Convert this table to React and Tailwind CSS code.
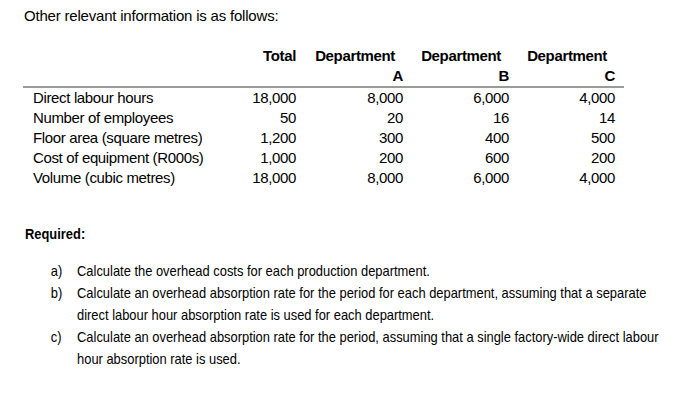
import React from "react";

const rows = [
  ["Direct labour hours", "18,000", "8,000", "6,000", "4,000"],
  ["Number of employees", "50", "20", "16", "14"],
  ["Floor area (square metres)", "1,200", "300", "400", "500"],
  ["Cost of equipment (R000s)", "1,000", "200", "600", "200"],
  ["Volume (cubic metres)", "18,000", "8,000", "6,000", "4,000"],
];

const grid = "grid grid-cols-[193px_80px_107px_106px_106px_9px]";

export default function App() {
  return (
    <div
      className="w-[700px] h-[407px] bg-white text-black overflow-hidden"
      style={{ fontFamily: '"Liberation Sans", Arial, sans-serif' }}
    >
      <p className="pt-[6px] pl-[24px] text-[15px] leading-[20px] tracking-[-0.2px]">
        Other relevant information is as follows:
      </p>

      <div className="ml-[23px] mt-[20px] w-[601px] text-[15px] leading-[20px] tracking-[-0.35px]">
        <div className={`${grid} font-bold pb-[1px]`}>
          <div />
          <div className="text-right">Total</div>
          {["A", "B", "C"].map((d) => (
            <div key={d} className="text-right">
              <div className="pr-[8px]">Department</div>
              <div className="leading-[19px]">{d}</div>
            </div>
          ))}
          <div />
        </div>
        <div className="h-[2px] bg-[#9a9a9a]" />
        <div>
          {rows.map((r) => (
            <div key={r[0]} className={grid}>
              <div className="pl-[10px] whitespace-nowrap">{r[0]}</div>
              <div className="text-right">{r[1]}</div>
              <div className="text-right">{r[2]}</div>
              <div className="text-right">{r[3]}</div>
              <div className="text-right">{r[4]}</div>
              <div />
            </div>
          ))}
        </div>
      </div>

      <div className="ml-[25px] mt-[36px] w-[700px] origin-top-left scale-x-[0.86] text-[15px] whitespace-nowrap">
        <p className="font-bold leading-[20px]">Required:</p>
        <ol className="mt-[16px] leading-[22px]">
          <li className="flex">
            <span className="ml-[30px] w-[30.5px] shrink-0">a)</span>
            <span>Calculate the overhead costs for each production department.</span>
          </li>
          <li className="flex">
            <span className="ml-[30px] w-[30.5px] shrink-0">b)</span>
            <span>
              Calculate an overhead absorption rate for the period for each department, assuming that a separate
              <br />
              direct labour hour absorption rate is used for each department.
            </span>
          </li>
          <li className="flex">
            <span className="ml-[30px] w-[30.5px] shrink-0">c)</span>
            <span>
              Calculate an overhead absorption rate for the period, assuming that a single factory-wide direct labour
              <br />
              hour absorption rate is used.
            </span>
          </li>
        </ol>
      </div>
    </div>
  );
}
